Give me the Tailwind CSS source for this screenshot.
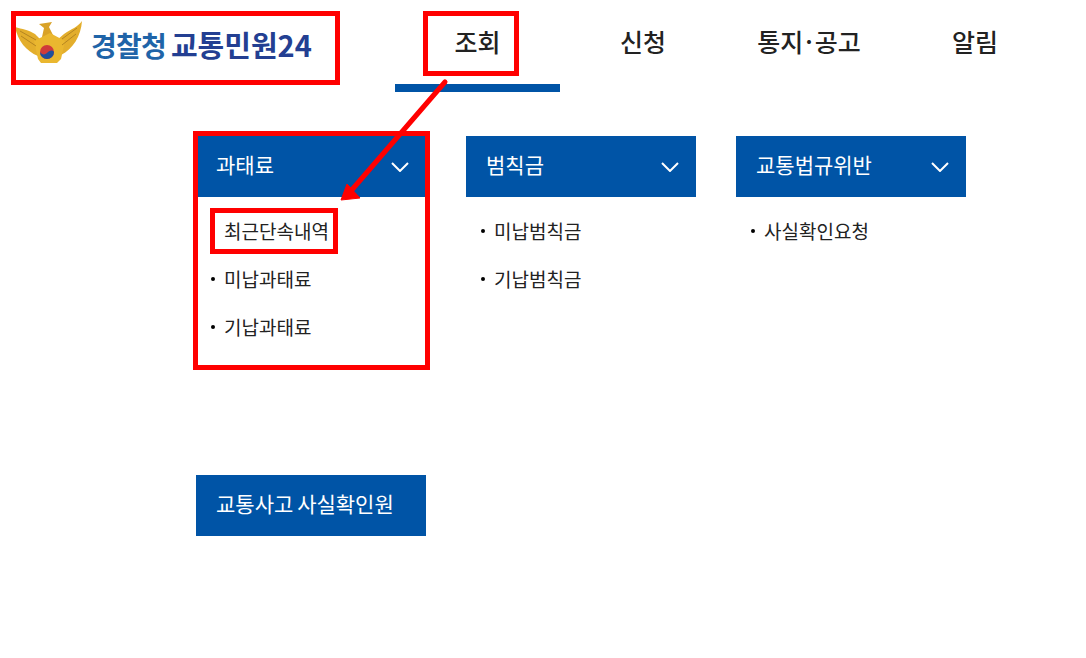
<!DOCTYPE html>
<html lang="ko">
<head>
<meta charset="utf-8">
<script src="https://cdn.jsdelivr.net/npm/@tailwindcss/browser@4"></script>
</head>
<body class="bg-white font-['Noto_Sans_CJK_KR','Noto_Sans',sans-serif] text-[#222]">
<div class="relative w-[1086px] h-[658px] overflow-hidden">
  <header class="flex h-[92px]">
    <a class="flex items-start w-[395px] pl-[15px] pt-[21px]">
      <svg class="w-[68px] h-[44px] shrink-0" viewBox="0 0 68 44">
        <path d="M0 6 C7 8 14 9 20 13 L26 19 L23 35 C11 30 3 20 0 6Z" fill="#e3ae2c"/>
        <path d="M67 0 C63 6 56 8 49 13 L42 19 L46 34 C58 28 66 15 67 0Z" fill="#e3ae2c"/>
        <path d="M24 3 L37 1 L34 6 L39 16 L27 16 L29 7Z" fill="#d9a227"/>
        <path d="M19 20 L35 12 L50 20 L46 38 L42 42 L26 42 L23 38Z" fill="#eab72f"/>
        <path d="M5 10 L21 19 M62 7 L47 18 M6 15 L21 25 M61 13 L47 24" stroke="#b58520" stroke-width="1" fill="none"/>
        <circle cx="32" cy="31" r="7" fill="#cf3a3a"/>
        <path d="M25 31 A7 7 0 0 0 39 31 C37 28 34 30 32 32 C30 34 27 34 25 31Z" fill="#1f4f9c"/>
      </svg>
      <span class="ml-[8px] mt-[5px] flex items-baseline gap-[5px] leading-[36px] font-bold whitespace-nowrap">
        <span class="text-[28px] tracking-[-0.8px] text-[#1f64a8]">경찰청</span><span class="text-[29px] text-[#233f92]">교통민원24</span>
      </span>
    </a>
    <nav class="flex text-[25px] leading-[82px] font-medium">
      <a class="w-[165px] h-[92px] text-center border-b-[8px] border-[#0054a6]">조회</a>
      <a class="w-[166px] text-center">신청</a>
      <a class="w-[166px] text-center">통지<span class="mx-[2px]">·</span>공고</a>
      <a class="w-[166px] text-center">알림</a>
    </nav>
  </header>

  <main class="pl-[196px] pt-[44px]">
    <div class="flex gap-[40px] h-[339px]">
      <section class="w-[230px]">
        <div class="flex items-center justify-between h-[61px] pl-[20px] pr-[17px] bg-[#0054a6] text-white text-[21px]">
          <span class="-mt-[3px]">과태료</span>
          <svg class="w-[18px] h-[10px]" viewBox="0 0 18 10" fill="none" stroke="white" stroke-width="2"><path d="M1 1 L9 9 L17 1"/></svg>
        </div>
        <ul class="pt-[10px] text-[19px] leading-[48px]">
          <li class="flex items-center pl-[15px] gap-[9px]"><span class="w-[4px] h-[4px] rounded-full bg-transparent"></span>최근단속내역</li>
          <li class="flex items-center pl-[15px] gap-[9px]"><span class="w-[4px] h-[4px] rounded-full bg-black"></span>미납과태료</li>
          <li class="flex items-center pl-[15px] gap-[9px]"><span class="w-[4px] h-[4px] rounded-full bg-black"></span>기납과태료</li>
        </ul>
      </section>
      <section class="w-[230px]">
        <div class="flex items-center justify-between h-[61px] pl-[20px] pr-[17px] bg-[#0054a6] text-white text-[21px]">
          <span class="-mt-[3px]">범칙금</span>
          <svg class="w-[18px] h-[10px]" viewBox="0 0 18 10" fill="none" stroke="white" stroke-width="2"><path d="M1 1 L9 9 L17 1"/></svg>
        </div>
        <ul class="pt-[10px] text-[19px] leading-[48px]">
          <li class="flex items-center pl-[15px] gap-[9px]"><span class="w-[4px] h-[4px] rounded-full bg-black"></span>미납범칙금</li>
          <li class="flex items-center pl-[15px] gap-[9px]"><span class="w-[4px] h-[4px] rounded-full bg-black"></span>기납범칙금</li>
        </ul>
      </section>
      <section class="w-[230px]">
        <div class="flex items-center justify-between h-[61px] pl-[20px] pr-[17px] bg-[#0054a6] text-white text-[21px]">
          <span class="-mt-[3px]">교통법규위반</span>
          <svg class="w-[18px] h-[10px]" viewBox="0 0 18 10" fill="none" stroke="white" stroke-width="2"><path d="M1 1 L9 9 L17 1"/></svg>
        </div>
        <ul class="pt-[10px] text-[19px] leading-[48px]">
          <li class="flex items-center pl-[15px] gap-[9px]"><span class="w-[4px] h-[4px] rounded-full bg-black"></span>사실확인요청</li>
        </ul>
      </section>
    </div>
    <div class="flex items-center w-[230px] h-[61px] pl-[20px] bg-[#0054a6] text-white text-[21px]"><span class="-mt-[3px] [word-spacing:-2px]">교통사고 사실확인원</span></div>
  </main>

  <!-- annotations laid over the page -->
  <div class="absolute left-[11px] top-[11px] w-[329px] h-[74px] border-[5px] border-[#ff0000]"></div>
  <div class="absolute left-[423px] top-[11px] w-[96px] h-[65px] border-[5px] border-[#ff0000]"></div>
  <div class="absolute left-[193px] top-[131px] w-[237px] h-[239px] border-[5px] border-[#ff0000]"></div>
  <div class="absolute left-[210px] top-[208px] w-[128px] h-[46px] border-[5px] border-[#ff0000]"></div>
  <svg class="absolute left-0 top-0 w-[1086px] h-[658px] pointer-events-none" viewBox="0 0 1086 658">
    <path d="M445 82 L350 192" stroke="#ff0000" stroke-width="5" stroke-linecap="round" fill="none"/>
    <path d="M341 200 L347 184 L360 198Z" fill="#ff0000" stroke="#ff0000" stroke-width="1"/>
  </svg>
</div>
</body>
</html>
